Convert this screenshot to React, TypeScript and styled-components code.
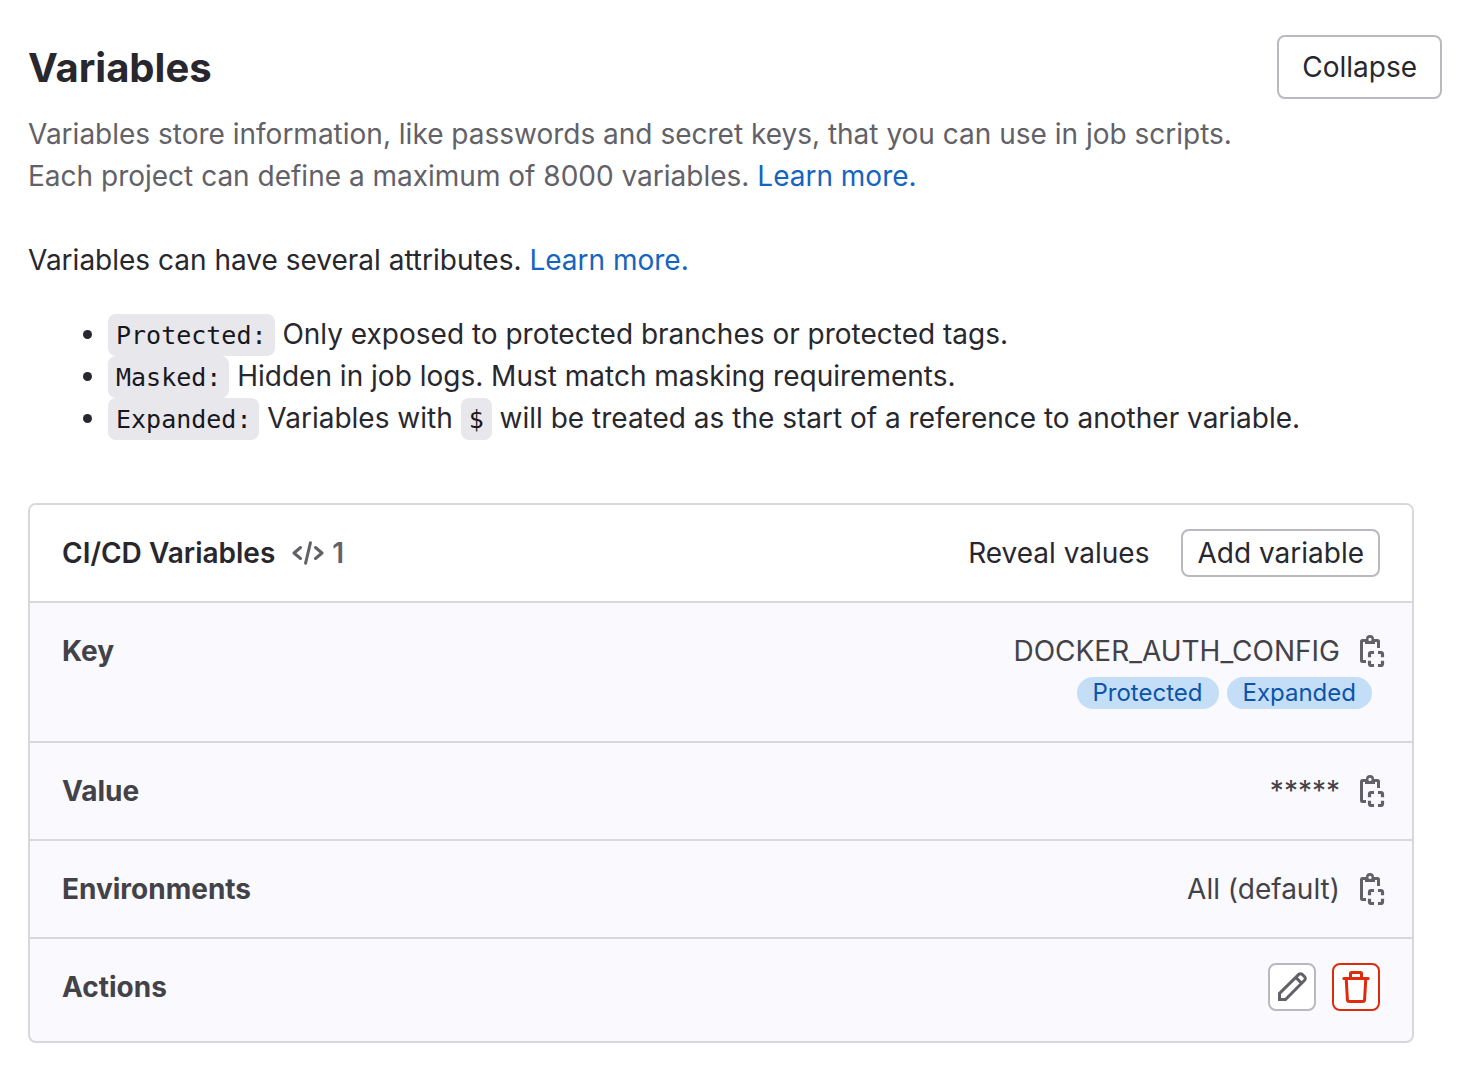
import React from 'react';
import styled, { createGlobalStyle } from 'styled-components';

const GlobalStyle = createGlobalStyle`
  * { box-sizing: border-box; }
  body {
    margin: 0;
    background: #fff;
    color: #28272d;
    font-family: Inter, "Noto Sans", sans-serif;
    font-size: 28px;
    line-height: 42px;
  }
`;

const Page = styled.main`
  padding: 35px 42px 32px 28px;
`;

const Header = styled.header`
  display: flex;
  justify-content: space-between;
  align-items: flex-start;
`;

const Title = styled.h2`
  margin: 8px 0 0;
  font-size: 40px;
  line-height: 50px;
  font-weight: 700;
  color: #28272d;
`;

const Intro = styled.p`
  margin: 14px 200px 42px 0;
  color: #626168;
`;

const Paragraph = styled.p`
  margin: 0 0 32px;
`;

const Link = styled.a`
  color: #1464c0;
  text-decoration: none;
`;

const Attributes = styled.ul`
  margin: 0;
  padding: 0 0 0 80px;
`;

const Code = styled.code`
  padding: 7px 8px 6px;
  border-radius: 8px;
  background: #e7e7ec;
  color: #18171d;
  font-family: "DejaVu Sans Mono", monospace;
  font-size: 25px;
  line-height: 1;
`;

const Button = styled.button<{ $size?: 'large' | 'small' | 'icon'; $danger?: boolean; $plain?: boolean }>`
  display: inline-flex;
  align-items: center;
  justify-content: center;
  flex: none;
  height: ${p => (p.$size === 'large' ? 64 : 48)}px;
  width: ${p => (p.$size === 'icon' ? '48px' : 'auto')};
  padding: 0 ${p => (p.$size === 'large' ? 23 : p.$size === 'icon' ? 0 : 14)}px;
  border: 2px solid ${p => (p.$plain ? 'transparent' : p.$danger ? '#dd2b0e' : '#bab9bf')};
  border-radius: 8px;
  background: ${p => (p.$plain ? 'transparent' : '#fff')};
  color: ${p => (p.$danger ? '#dd2b0e' : p.$size === 'icon' ? '#626168' : '#28272d')};
  font: inherit;
  cursor: pointer;
`;

const Card = styled.section`
  margin: 64px 28px 0 0;
  border: 2px solid #d8d8db;
  border-radius: 8px;
  background: #faf9fe;
  overflow: hidden;
`;

const CardHeader = styled.div`
  display: flex;
  align-items: center;
  justify-content: space-between;
  padding: 24px 32px;
  background: #fff;
`;

const CardTitle = styled.h3`
  display: flex;
  align-items: center;
  margin: 0;
  font-size: 28px;
  line-height: 42px;
  font-weight: 600;
`;

const Count = styled.span`
  display: inline-flex;
  align-items: center;
  gap: 8px;
  margin-left: 17px;
  color: #626168;
`;

const Group = styled.div`
  display: flex;
  gap: 16px;
`;

const Rows = styled.dl`
  margin: 0;
`;

const Row = styled.div`
  display: flex;
  justify-content: space-between;
  padding: 27px 32px;
  border-top: 2px solid #d8d8db;
  color: #434248;
`;

const ActionRow = styled(Row)`
  align-items: center;
  padding: 24px 32px 30px;
`;

const Term = styled.dt`
  font-weight: 700;
`;

const Detail = styled.dd`
  display: flex;
  flex-direction: column;
  align-items: flex-end;
  margin: 0;
`;

const ValueLine = styled.div`
  display: flex;
  align-items: center;
  gap: 16px;
  margin-right: -8px;
`;

const CopyButton = styled.button`
  display: flex;
  padding: 0;
  border: 0;
  background: none;
  color: #626168;
  cursor: pointer;
`;

const Badges = styled.div`
  display: flex;
  gap: 8px;
  padding: 5px 8px 5px 0;
`;

const Badge = styled.span`
  height: 32px;
  padding: 0 16px;
  border-radius: 16px;
  background: #c5def7;
  color: #0b55a8;
  font-size: 24px;
  line-height: 32px;
`;

const Svg = styled.svg.attrs({ viewBox: '0 0 16 16', 'aria-hidden': true })`
  display: block;
  width: 32px;
  height: 32px;
  fill: none;
  stroke: currentColor;
  stroke-width: 1.5;
`;

const CodeIcon = () => (
  <Svg strokeLinecap="round" strokeLinejoin="round">
    <path d="M4.25 5.25 1 8l3.25 2.75M11.75 5.25 15 8l-3.25 2.75M9.2 2.9 6.8 13.1" />
  </Svg>
);

const CopyIcon = () => (
  <Svg>
    <path d="M5 13.25H3.25a.5.5 0 0 1-.5-.5v-9.5a.5.5 0 0 1 .5-.5H5M9 2.75h1.75a.5.5 0 0 1 .5.5V6.5" />
    <path
      d="M4.5 2H5a2 2 0 0 1 4 0h.5v2.5h-5zM7 1.4a.8.8 0 1 0 0 1.6.8.8 0 0 0 0-1.6z"
      fill="currentColor"
      fillRule="evenodd"
      stroke="none"
    />
    <path
      strokeWidth="1.6"
      d="M6.75 11.1V9.5a.75.75 0 0 1 .75-.75h1.5M11 8.75h1.5a.75.75 0 0 1 .75.75v1.6M13.25 12.9v1.6a.75.75 0 0 1-.75.75H11M9 15.25H7.5a.75.75 0 0 1-.75-.75v-1.6"
    />
  </Svg>
);

const PencilIcon = () => (
  <Svg>
    <path d="M1.75 14.25v-3L11.4 1.7a1.2 1.2 0 0 1 1.7 0l1.2 1.2a1.2 1.2 0 0 1 0 1.7L4.75 14.25zM9.9 3.2l2.9 2.9" />
  </Svg>
);

const TrashIcon = () => (
  <Svg strokeLinecap="round" strokeLinejoin="round">
    <path d="M1.9 3.75h12.2M5.25 3.75v-2.5a.5.5 0 0 1 .5-.5h4.5a.5.5 0 0 1 .5.5v2.5M3.1 3.75l.6 10.55c0 .5.4.95.95.95h6.7c.5 0 .9-.4.95-.95L12.9 3.75" />
  </Svg>
);

const Copy = ({ label }: { label: string }) => (
  <CopyButton type="button" aria-label={label}>
    <CopyIcon />
  </CopyButton>
);

export default function App() {
  return (
    <Page>
      <GlobalStyle />
      <Header>
        <Title>Variables</Title>
        <Button $size="large" type="button">Collapse</Button>
      </Header>
      <Intro>
        Variables store information, like passwords and secret keys, that you can use in job scripts. Each project can
        define a maximum of 8000 variables. <Link href="#limits">Learn more.</Link>
      </Intro>
      <Paragraph>
        Variables can have several attributes. <Link href="#attributes">Learn more.</Link>
      </Paragraph>
      <Attributes>
        <li><Code>Protected:</Code> Only exposed to protected branches or protected tags.</li>
        <li><Code>Masked:</Code> Hidden in job logs. Must match masking requirements.</li>
        <li><Code>Expanded:</Code> Variables with <Code>$</Code> will be treated as the start of a reference to another variable.</li>
      </Attributes>
      <Card>
        <CardHeader>
          <CardTitle>
            CI/CD Variables
            <Count><CodeIcon />1</Count>
          </CardTitle>
          <Group>
            <Button $plain type="button">Reveal values</Button>
            <Button type="button">Add variable</Button>
          </Group>
        </CardHeader>
        <Rows>
          <Row>
            <Term>Key</Term>
            <Detail>
              <ValueLine>DOCKER_AUTH_CONFIG<Copy label="Copy key" /></ValueLine>
              <Badges><Badge>Protected</Badge><Badge>Expanded</Badge></Badges>
            </Detail>
          </Row>
          <Row>
            <Term>Value</Term>
            <Detail><ValueLine>*****<Copy label="Copy value" /></ValueLine></Detail>
          </Row>
          <Row>
            <Term>Environments</Term>
            <Detail><ValueLine>All (default)<Copy label="Copy environment" /></ValueLine></Detail>
          </Row>
          <ActionRow>
            <Term>Actions</Term>
            <Detail>
              <Group>
                <Button $size="icon" type="button" aria-label="Edit"><PencilIcon /></Button>
                <Button $size="icon" $danger type="button" aria-label="Delete"><TrashIcon /></Button>
              </Group>
            </Detail>
          </ActionRow>
        </Rows>
      </Card>
    </Page>
  );
}
